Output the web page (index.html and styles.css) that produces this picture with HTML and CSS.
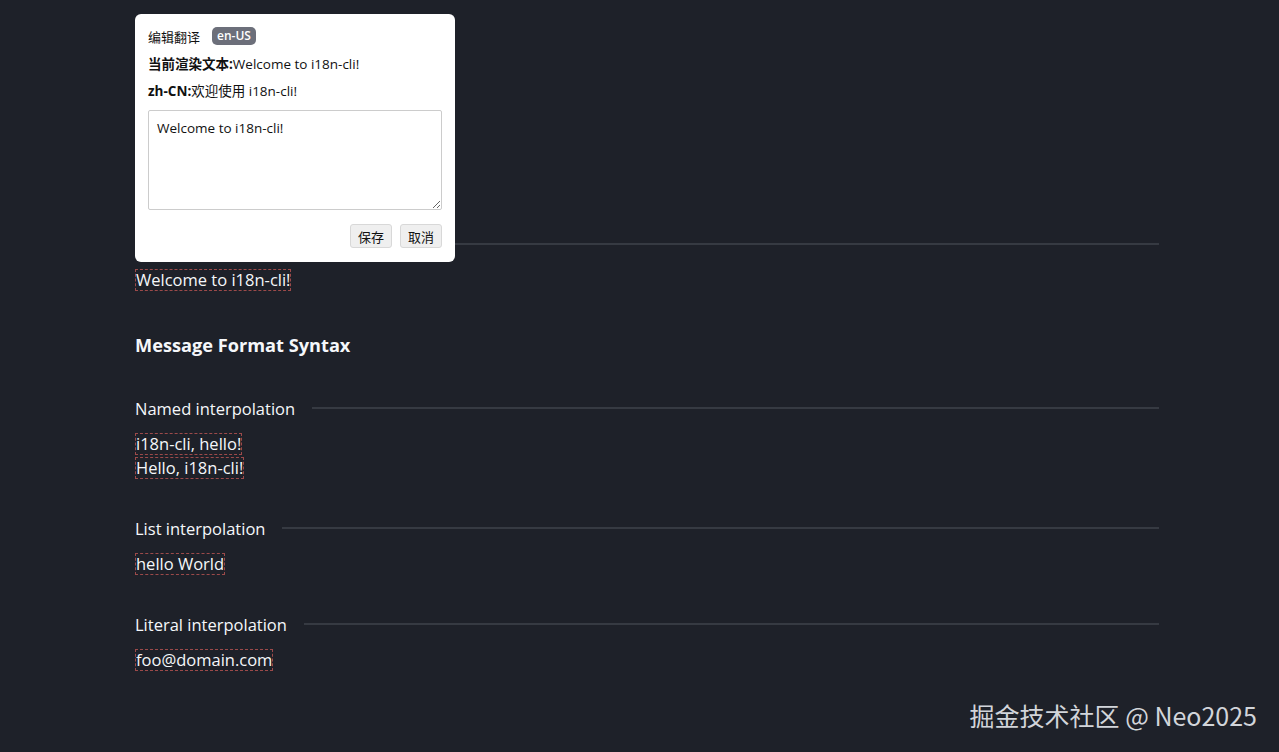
FILE: index.html
```html
<!DOCTYPE html>
<html lang="zh-CN">
<head>
<meta charset="utf-8">
<title>i18n-cli</title>
<link rel="stylesheet" href="styles.css">
</head>
<body>
<main class="page">
  <section class="section first">
    <div class="sec-head"><span class="sec-title">Basic usage</span><span class="rule"></span></div>
    <div class="items"><span class="msg">Welcome to i18n-cli!</span></div>
  </section>

  <h2 class="group-title">Message Format Syntax</h2>

  <section class="section">
    <div class="sec-head"><span class="sec-title">Named interpolation</span><span class="rule"></span></div>
    <div class="items">
      <span class="msg">i18n-cli, hello!</span><br>
      <span class="msg">Hello, i18n-cli!</span>
    </div>
  </section>

  <section class="section">
    <div class="sec-head"><span class="sec-title">List interpolation</span><span class="rule"></span></div>
    <div class="items"><span class="msg">hello World</span></div>
  </section>

  <section class="section">
    <div class="sec-head"><span class="sec-title">Literal interpolation</span><span class="rule"></span></div>
    <div class="items"><span class="msg">foo@domain.com</span></div>
  </section>
</main>

<div class="editor">
  <div class="ed-head"><span class="ed-title">编辑翻译</span><span class="badge">en-US</span></div>
  <p class="ed-line first-line"><b>当前渲染文本:</b>Welcome to i18n-cli!</p>
  <p class="ed-line"><b>zh-CN:</b>欢迎使用 i18n-cli!</p>
  <textarea class="ed-text">Welcome to i18n-cli!</textarea>
  <div class="ed-actions"><button class="btn">保存</button><button class="btn">取消</button></div>
</div>

<div class="watermark">掘金技术社区 @ Neo2025</div>
</body>
</html>
```

FILE: styles.css
```css
html, body {
  margin: 0;
  padding: 0;
  background: #1e2129;
  color: #f5f7fa;
  font-family: "Open Sans", "Noto Sans CJK SC", sans-serif;
}
.page {
  width: 1024px;
  padding: 232px 0 60px 135px;
}
.section { margin-bottom: 36px; }
.section.first { margin-bottom: 40px; }
.sec-head {
  display: flex;
  align-items: center;
  gap: 17px;
  height: 24px;
  margin-bottom: 12px;
}
.sec-title {
  font-size: 16.5px;
  white-space: nowrap;
}
.rule {
  flex: 1;
  height: 2px;
  background: #363a42;
}
.items {
  font-size: 16.5px;
  line-height: 24px;
}
.msg {
  display: inline-block;
  line-height: 20px;
  border: 1px dashed #9c4a4a;
  vertical-align: top;
  margin-top: 1px;
}
.group-title {
  font-size: 18.2px;
  font-weight: 700;
  margin: 0 0 38px 0;
  line-height: 26px;
}
.editor {
  position: absolute;
  left: 135px;
  top: 14px;
  width: 294px;
  padding: 11px 13px 14px;
  background: #fff;
  border-radius: 6px;
  color: #111;
  font-size: 13.5px;
}
.ed-head {
  display: flex;
  align-items: center;
  gap: 12px;
  height: 22px;
}
.ed-title { font-size: 13px; }
.badge {
  background: #6c6f7a;
  color: #fff;
  font-size: 12px;
  font-weight: 600;
  padding: 1px 5px;
  border-radius: 5px;
  line-height: 16px;
}
.ed-line {
  margin: 8px 0 0;
  line-height: 19px;
}
.ed-line.first-line { margin-top: 8px; }
.ed-line b { font-weight: 700; }
.ed-text {
  display: block;
  box-sizing: border-box;
  width: 294px;
  height: 100px;
  margin-top: 9px;
  padding: 8px;
  border: 1px solid #ccc;
  border-radius: 2px;
  font-family: "Open Sans", "Noto Sans CJK SC", sans-serif;
  font-size: 13.5px;
  color: #111;
  resize: vertical;
}
.ed-actions {
  display: flex;
  justify-content: flex-end;
  gap: 8px;
  margin-top: 14px;
}
.btn {
  box-sizing: border-box;
  height: 24px;
  width: 42px;
  padding: 0;
  background: #efefef;
  border: 1px solid #d8d8d8;
  border-radius: 3px;
  font-family: "Noto Sans CJK SC", sans-serif;
  font-size: 13px;
  color: #111;
}
.watermark {
  position: absolute;
  right: 22px;
  top: 697px;
  font-family: "Noto Sans CJK SC", sans-serif;
  font-size: 25px;
  color: #d2d5da;
}
```
